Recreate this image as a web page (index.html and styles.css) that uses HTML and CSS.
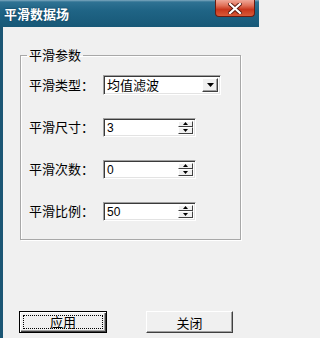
FILE: index.html
```html
<!DOCTYPE html>
<html>
<head>
<meta charset="utf-8">
<link rel="stylesheet" href="styles.css">
</head>
<body>
<div class="window">
  <div class="titlebar">
    <span class="title">平滑数据场</span>
    <div class="close"><svg width="14" height="11" viewBox="0 0 14 11"><path d="M2 1 L12 10 M12 1 L2 10" stroke="#5a1a10" stroke-width="4" stroke-linecap="square"/><path d="M2 1 L12 10 M12 1 L2 10" stroke="#fff" stroke-width="2.2" stroke-linecap="square"/></svg></div>
  </div>
  <div class="client">
    <fieldset class="group">
      <legend class="legend">平滑参数</legend>
      <div class="row">
        <span class="label">平滑类型：</span>
        <div class="combo">
          <span class="combo-text">均值滤波</span>
          <span class="combo-btn"><svg width="7" height="4" viewBox="0 0 7 4"><path d="M0 0 H7 L3.5 4 Z" fill="#000"/></svg></span>
        </div>
      </div>
      <div class="row">
        <span class="label">平滑尺寸：</span>
        <div class="spin">
          <span class="spin-text">3</span>
          <span class="spin-btns"><span class="sb"><svg width="5" height="3" viewBox="0 0 5 3"><path d="M2.5 0 L5 3 H0 Z" fill="#000"/></svg></span><span class="sb"><svg width="5" height="3" viewBox="0 0 5 3"><path d="M0 0 H5 L2.5 3 Z" fill="#000"/></svg></span></span>
        </div>
      </div>
      <div class="row">
        <span class="label">平滑次数：</span>
        <div class="spin">
          <span class="spin-text">0</span>
          <span class="spin-btns"><span class="sb"><svg width="5" height="3" viewBox="0 0 5 3"><path d="M2.5 0 L5 3 H0 Z" fill="#000"/></svg></span><span class="sb"><svg width="5" height="3" viewBox="0 0 5 3"><path d="M0 0 H5 L2.5 3 Z" fill="#000"/></svg></span></span>
        </div>
      </div>
      <div class="row">
        <span class="label">平滑比例：</span>
        <div class="spin">
          <span class="spin-text">50</span>
          <span class="spin-btns"><span class="sb"><svg width="5" height="3" viewBox="0 0 5 3"><path d="M2.5 0 L5 3 H0 Z" fill="#000"/></svg></span><span class="sb"><svg width="5" height="3" viewBox="0 0 5 3"><path d="M0 0 H5 L2.5 3 Z" fill="#000"/></svg></span></span>
        </div>
      </div>
    </fieldset>
    <div class="buttons">
      <div class="btn default"><span class="focus">应用</span></div>
      <div class="btn">关闭</div>
    </div>
  </div>
</div>
</body>
</html>
```
FILE: styles.css
```css
html, body {
  margin: 0;
  padding: 0;
  background: #f0f0f0;
}
.window {
  width: 259px;
  height: 338px;
  display: flex;
  flex-direction: column;
  font-family: "Noto Sans CJK SC", "Liberation Sans", sans-serif;
  font-size: 12px;
  color: #000;
  overflow: hidden;
}
.titlebar {
  height: 27px;
  flex: none;
  display: flex;
  justify-content: space-between;
  align-items: flex-start;
  background: linear-gradient(#7fa9c0 0px, #2f7293 2px, #1f6485 40%, #175877 100%);
}
.title {
  color: #fff;
  font-weight: bold;
  font-size: 13px;
  line-height: 27px;
  padding-left: 4px;
  letter-spacing: 0px;
  text-shadow: 0 0 2px #0b3550;
}
.close {
  width: 40px;
  height: 17px;
  margin-right: 4px;
  box-sizing: border-box;
  border: 1px solid #6b1b10;
  border-top: none;
  border-radius: 0 0 4px 4px;
  background: linear-gradient(#f0a898 0%, #e07058 35%, #c8361c 60%, #d85a38 100%);
  display: flex;
  align-items: center;
  justify-content: center;
}
.client {
  flex: 1;
  display: flex;
  flex-direction: column;
  border-left: 3px solid #1b5674;
  background: #f0f0f0;
  padding: 21px 0 5px 17px;
}
.group {
  margin: 0;
  width: 221px;
  box-sizing: border-box;
  border: 1px solid #a8a8a8;
  box-shadow: inset 1px 1px 0 #fff, 1px 1px 0 #fff;
  padding: 13px 0 18px 8px;
}
.legend {
  padding: 0 2px;
  margin-left: -2px;
  line-height: 14px;
  font-size: 13px;
}
.row {
  display: flex;
  align-items: center;
  height: 20px;
}
.row + .row {
  margin-top: 22px;
}
.label {
  width: 74px;
  font-size: 13px;
  line-height: 20px;
}
.combo, .spin {
  box-sizing: border-box;
  height: 20px;
  background: #fff;
  border-top: 1px solid #a0a0a0;
  border-left: 1px solid #a0a0a0;
  border-right: 1px solid #fff;
  border-bottom: 1px solid #fff;
  box-shadow: inset 1px 1px 0 #3a3a3a, inset -1px -1px 0 #e3e3e3;
  display: flex;
  align-items: stretch;
  padding: 2px;
}
.combo {
  width: 118px;
}
.spin {
  width: 93px;
  height: 19px;
}
.combo-text {
  flex: 1;
  font-size: 13px;
  line-height: 14px;
  padding-left: 1px;
}
.combo-btn {
  width: 16px;
  box-sizing: border-box;
  background: #f0f0f0;
  border-top: 1px solid #fff;
  border-left: 1px solid #fff;
  border-right: 1px solid #404040;
  border-bottom: 1px solid #404040;
  box-shadow: inset -1px -1px 0 #a0a0a0;
  display: flex;
  align-items: center;
  justify-content: center;
}
.spin-text {
  flex: 1;
  font-family: "Liberation Sans", sans-serif;
  font-size: 12px;
  line-height: 14px;
  padding-left: 1px;
}
.spin-btns {
  width: 15px;
  display: flex;
  flex-direction: column;
}
.sb {
  flex: 1;
  box-sizing: border-box;
  background: #f0f0f0;
  border-top: 1px solid #fff;
  border-left: 1px solid #fff;
  border-right: 1px solid #404040;
  border-bottom: 1px solid #404040;
  display: flex;
  align-items: center;
  justify-content: center;
}
.buttons {
  margin-top: auto;
  display: flex;
  gap: 39px;
  padding-left: 0;
  margin-left: -1px;
}
.btn {
  width: 87px;
  height: 22px;
  box-sizing: border-box;
  background: #f0f0f0;
  border-top: 1px solid #fff;
  border-left: 1px solid #fff;
  border-right: 1px solid #404040;
  border-bottom: 1px solid #404040;
  box-shadow: inset -1px -1px 0 #a0a0a0;
  display: flex;
  align-items: center;
  justify-content: center;
  font-size: 13px;
}
.btn.default {
  width: 88px;
  border: 1px solid #000;
  box-shadow: inset 1px 1px 0 #fff, inset -1px -1px 0 #404040, inset -2px -2px 0 #a0a0a0;
  padding: 3px;
}
.focus {
  flex: 1;
  align-self: stretch;
  border: 1px dotted #000;
  display: flex;
  align-items: center;
  justify-content: center;
  line-height: 12px;
}
```
